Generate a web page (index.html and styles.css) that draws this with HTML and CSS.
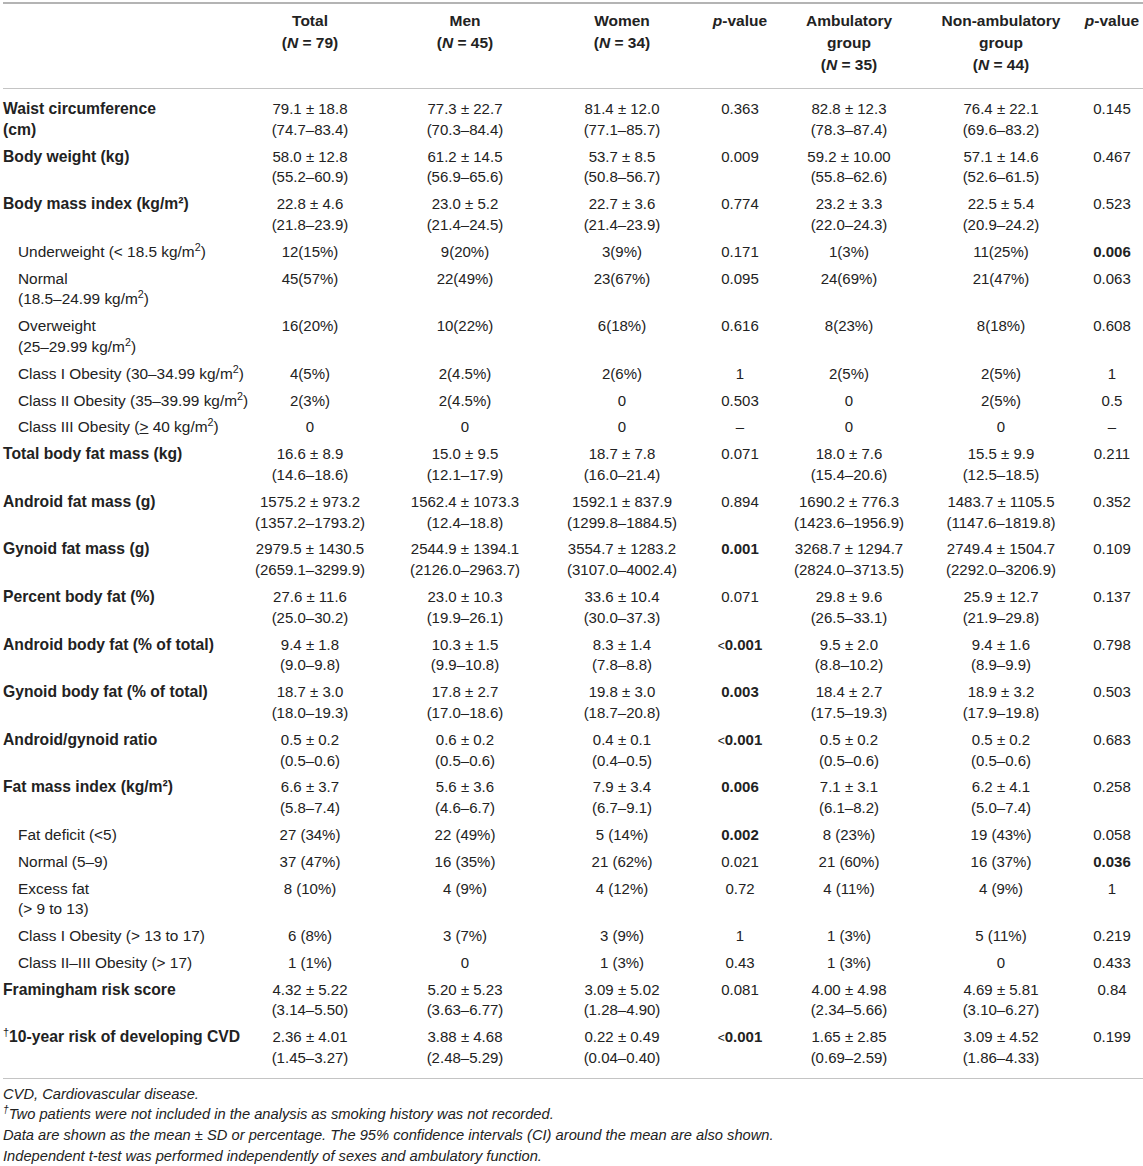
FILE: index.html
```html
<!DOCTYPE html>
<html lang="en">
<head>
  <meta charset="UTF-8">
  <meta name="viewport" content="width=device-width, initial-scale=1.0">
  <title>Body composition and cardiovascular risk</title>
  <link rel="stylesheet" href="styles.css">
</head>
<body>
  <div class="container">
    <table class="data-table">
      <colgroup>
        <col class="col-label">
        <col class="col-total">
        <col class="col-men">
        <col class="col-women">
        <col class="col-p1">
        <col class="col-amb">
        <col class="col-nonamb">
        <col class="col-p2">
      </colgroup>
      <thead>
        <tr>
          <th></th>
          <th>Total<br>(<i>N</i> = 79)</th>
          <th>Men<br>(<i>N</i> = 45)</th>
          <th>Women<br>(<i>N</i> = 34)</th>
          <th><i>p</i>-value</th>
          <th>Ambulatory<br>group<br>(<i>N</i> = 35)</th>
          <th>Non-ambulatory<br>group<br>(<i>N</i> = 44)</th>
          <th><i>p</i>-value</th>
        </tr>
      </thead>
      <tbody>
        <tr>
          <td class="label main">Waist circumference<br>(cm)</td>
          <td>79.1 ± 18.8<br>(74.7–83.4)</td>
          <td>77.3 ± 22.7<br>(70.3–84.4)</td>
          <td>81.4 ± 12.0<br>(77.1–85.7)</td>
          <td>0.363</td>
          <td>82.8 ± 12.3<br>(78.3–87.4)</td>
          <td>76.4 ± 22.1<br>(69.6–83.2)</td>
          <td>0.145</td>
        </tr>
        <tr>
          <td class="label main">Body weight (kg)</td>
          <td>58.0 ± 12.8<br>(55.2–60.9)</td>
          <td>61.2 ± 14.5<br>(56.9–65.6)</td>
          <td>53.7 ± 8.5<br>(50.8–56.7)</td>
          <td>0.009</td>
          <td>59.2 ± 10.00<br>(55.8–62.6)</td>
          <td>57.1 ± 14.6<br>(52.6–61.5)</td>
          <td>0.467</td>
        </tr>
        <tr>
          <td class="label main">Body mass index (kg/m²)</td>
          <td>22.8 ± 4.6<br>(21.8–23.9)</td>
          <td>23.0 ± 5.2<br>(21.4–24.5)</td>
          <td>22.7 ± 3.6<br>(21.4–23.9)</td>
          <td>0.774</td>
          <td>23.2 ± 3.3<br>(22.0–24.3)</td>
          <td>22.5 ± 5.4<br>(20.9–24.2)</td>
          <td>0.523</td>
        </tr>
        <tr>
          <td class="label sub">Underweight (&lt; 18.5 kg/m<sup>2</sup>)</td>
          <td>12(15%)</td>
          <td>9(20%)</td>
          <td>3(9%)</td>
          <td>0.171</td>
          <td>1(3%)</td>
          <td>11(25%)</td>
          <td><b>0.006</b></td>
        </tr>
        <tr>
          <td class="label sub">Normal<br>(18.5–24.99 kg/m<sup>2</sup>)</td>
          <td>45(57%)</td>
          <td>22(49%)</td>
          <td>23(67%)</td>
          <td>0.095</td>
          <td>24(69%)</td>
          <td>21(47%)</td>
          <td>0.063</td>
        </tr>
        <tr>
          <td class="label sub">Overweight<br>(25–29.99 kg/m<sup>2</sup>)</td>
          <td>16(20%)</td>
          <td>10(22%)</td>
          <td>6(18%)</td>
          <td>0.616</td>
          <td>8(23%)</td>
          <td>8(18%)</td>
          <td>0.608</td>
        </tr>
        <tr>
          <td class="label sub">Class I Obesity (30–34.99 kg/m<sup>2</sup>)</td>
          <td>4(5%)</td>
          <td>2(4.5%)</td>
          <td>2(6%)</td>
          <td>1</td>
          <td>2(5%)</td>
          <td>2(5%)</td>
          <td>1</td>
        </tr>
        <tr>
          <td class="label sub">Class II Obesity (35–39.99 kg/m<sup>2</sup>)</td>
          <td>2(3%)</td>
          <td>2(4.5%)</td>
          <td>0</td>
          <td>0.503</td>
          <td>0</td>
          <td>2(5%)</td>
          <td>0.5</td>
        </tr>
        <tr>
          <td class="label sub">Class III Obesity (<u>&gt;</u> 40 kg/m<sup>2</sup>)</td>
          <td>0</td>
          <td>0</td>
          <td>0</td>
          <td>–</td>
          <td>0</td>
          <td>0</td>
          <td>–</td>
        </tr>
        <tr>
          <td class="label main">Total body fat mass (kg)</td>
          <td>16.6 ± 8.9<br>(14.6–18.6)</td>
          <td>15.0 ± 9.5<br>(12.1–17.9)</td>
          <td>18.7 ± 7.8<br>(16.0–21.4)</td>
          <td>0.071</td>
          <td>18.0 ± 7.6<br>(15.4–20.6)</td>
          <td>15.5 ± 9.9<br>(12.5–18.5)</td>
          <td>0.211</td>
        </tr>
        <tr>
          <td class="label main">Android fat mass (g)</td>
          <td>1575.2 ± 973.2<br>(1357.2–1793.2)</td>
          <td>1562.4 ± 1073.3<br>(12.4–18.8)</td>
          <td>1592.1 ± 837.9<br>(1299.8–1884.5)</td>
          <td>0.894</td>
          <td>1690.2 ± 776.3<br>(1423.6–1956.9)</td>
          <td>1483.7 ± 1105.5<br>(1147.6–1819.8)</td>
          <td>0.352</td>
        </tr>
        <tr>
          <td class="label main">Gynoid fat mass (g)</td>
          <td>2979.5 ± 1430.5<br>(2659.1–3299.9)</td>
          <td>2544.9 ± 1394.1<br>(2126.0–2963.7)</td>
          <td>3554.7 ± 1283.2<br>(3107.0–4002.4)</td>
          <td><b>0.001</b></td>
          <td>3268.7 ± 1294.7<br>(2824.0–3713.5)</td>
          <td>2749.4 ± 1504.7<br>(2292.0–3206.9)</td>
          <td>0.109</td>
        </tr>
        <tr>
          <td class="label main">Percent body fat (%)</td>
          <td>27.6 ± 11.6<br>(25.0–30.2)</td>
          <td>23.0 ± 10.3<br>(19.9–26.1)</td>
          <td>33.6 ± 10.4<br>(30.0–37.3)</td>
          <td>0.071</td>
          <td>29.8 ± 9.6<br>(26.5–33.1)</td>
          <td>25.9 ± 12.7<br>(21.9–29.8)</td>
          <td>0.137</td>
        </tr>
        <tr>
          <td class="label main">Android body fat (% of total)</td>
          <td>9.4 ± 1.8<br>(9.0–9.8)</td>
          <td>10.3 ± 1.5<br>(9.9–10.8)</td>
          <td>8.3 ± 1.4<br>(7.8–8.8)</td>
          <td><b><span class="lt">&lt;</span>0.001</b></td>
          <td>9.5 ± 2.0<br>(8.8–10.2)</td>
          <td>9.4 ± 1.6<br>(8.9–9.9)</td>
          <td>0.798</td>
        </tr>
        <tr>
          <td class="label main">Gynoid body fat (% of total)</td>
          <td>18.7 ± 3.0<br>(18.0–19.3)</td>
          <td>17.8 ± 2.7<br>(17.0–18.6)</td>
          <td>19.8 ± 3.0<br>(18.7–20.8)</td>
          <td><b>0.003</b></td>
          <td>18.4 ± 2.7<br>(17.5–19.3)</td>
          <td>18.9 ± 3.2<br>(17.9–19.8)</td>
          <td>0.503</td>
        </tr>
        <tr>
          <td class="label main">Android/gynoid ratio</td>
          <td>0.5 ± 0.2<br>(0.5–0.6)</td>
          <td>0.6 ± 0.2<br>(0.5–0.6)</td>
          <td>0.4 ± 0.1<br>(0.4–0.5)</td>
          <td><b><span class="lt">&lt;</span>0.001</b></td>
          <td>0.5 ± 0.2<br>(0.5–0.6)</td>
          <td>0.5 ± 0.2<br>(0.5–0.6)</td>
          <td>0.683</td>
        </tr>
        <tr>
          <td class="label main">Fat mass index (kg/m²)</td>
          <td>6.6 ± 3.7<br>(5.8–7.4)</td>
          <td>5.6 ± 3.6<br>(4.6–6.7)</td>
          <td>7.9 ± 3.4<br>(6.7–9.1)</td>
          <td><b>0.006</b></td>
          <td>7.1 ± 3.1<br>(6.1–8.2)</td>
          <td>6.2 ± 4.1<br>(5.0–7.4)</td>
          <td>0.258</td>
        </tr>
        <tr>
          <td class="label sub">Fat deficit (&lt;5)</td>
          <td>27 (34%)</td>
          <td>22 (49%)</td>
          <td>5 (14%)</td>
          <td><b>0.002</b></td>
          <td>8 (23%)</td>
          <td>19 (43%)</td>
          <td>0.058</td>
        </tr>
        <tr>
          <td class="label sub">Normal (5–9)</td>
          <td>37 (47%)</td>
          <td>16 (35%)</td>
          <td>21 (62%)</td>
          <td>0.021</td>
          <td>21 (60%)</td>
          <td>16 (37%)</td>
          <td><b>0.036</b></td>
        </tr>
        <tr>
          <td class="label sub">Excess fat<br>(&gt; 9 to 13)</td>
          <td>8 (10%)</td>
          <td>4 (9%)</td>
          <td>4 (12%)</td>
          <td>0.72</td>
          <td>4 (11%)</td>
          <td>4 (9%)</td>
          <td>1</td>
        </tr>
        <tr>
          <td class="label sub">Class I Obesity (&gt; 13 to 17)</td>
          <td>6 (8%)</td>
          <td>3 (7%)</td>
          <td>3 (9%)</td>
          <td>1</td>
          <td>1 (3%)</td>
          <td>5 (11%)</td>
          <td>0.219</td>
        </tr>
        <tr>
          <td class="label sub">Class II–III Obesity (&gt; 17)</td>
          <td>1 (1%)</td>
          <td>0</td>
          <td>1 (3%)</td>
          <td>0.43</td>
          <td>1 (3%)</td>
          <td>0</td>
          <td>0.433</td>
        </tr>
        <tr>
          <td class="label main">Framingham risk score</td>
          <td>4.32 ± 5.22<br>(3.14–5.50)</td>
          <td>5.20 ± 5.23<br>(3.63–6.77)</td>
          <td>3.09 ± 5.02<br>(1.28–4.90)</td>
          <td>0.081</td>
          <td>4.00 ± 4.98<br>(2.34–5.66)</td>
          <td>4.69 ± 5.81<br>(3.10–6.27)</td>
          <td>0.84</td>
        </tr>
        <tr>
          <td class="label main"><sup class="dagger">†</sup>10-year risk of developing CVD</td>
          <td>2.36 ± 4.01<br>(1.45–3.27)</td>
          <td>3.88 ± 4.68<br>(2.48–5.29)</td>
          <td>0.22 ± 0.49<br>(0.04–0.40)</td>
          <td><b><span class="lt">&lt;</span>0.001</b></td>
          <td>1.65 ± 2.85<br>(0.69–2.59)</td>
          <td>3.09 ± 4.52<br>(1.86–4.33)</td>
          <td>0.199</td>
        </tr>
      </tbody>
    </table>

    <div class="notes">
      <p>CVD, Cardiovascular disease.</p>
      <p><sup class="dagger">†</sup>Two patients were not included in the analysis as smoking history was not recorded.</p>
      <p>Data are shown as the mean ± SD or percentage. The 95% confidence intervals (CI) around the mean are also shown.</p>
      <p>Independent t-test was performed independently of sexes and ambulatory function.</p>
    </div>
  </div>
</body>
</html>
```

FILE: styles.css
```css
body {
  margin: 0;
  background-color: #fff;
  color: #222;
  font-family: "Liberation Sans", Arial, sans-serif;
}
.container {
  padding: 2px 0 0 3px;
}
.data-table {
  width: 1140px;
  border-collapse: collapse;
  table-layout: fixed;
  font-size: 15px;
  line-height: 20.8px;
}
.col-label { width: 228px; }
.col-total { width: 158px; }
.col-men { width: 152px; }
.col-women { width: 162px; }
.col-p1 { width: 74px; }
.col-amb { width: 144px; }
.col-nonamb { width: 160px; }
.col-p2 { width: 62px; }
.data-table thead tr {
  border-top: 2px solid #b4b4b4;
  border-bottom: 1px solid #c4c4c4;
}
.data-table th {
  font-size: 15.5px;
  font-weight: bold;
  line-height: 22px;
  text-align: center;
  vertical-align: top;
  padding: 6px 0 12px;
  white-space: nowrap;
}
.data-table td {
  text-align: center;
  vertical-align: top;
  padding: 3px 0;
  white-space: nowrap;
}
.data-table tbody tr:first-child td {
  padding-top: 10px;
}
.data-table tbody tr:last-child {
  border-bottom: 1px solid #c4c4c4;
}
.data-table tbody tr:last-child td {
  padding-bottom: 9px;
}
.data-table td.label {
  text-align: left;
  font-size: 15.7px;
}
.data-table td.main {
  font-weight: bold;
}
.data-table td.sub {
  padding-left: 15px;
  font-size: 15.4px;
}
sup {
  font-size: 0.7em;
  line-height: 0;
}
.dagger {
  font-weight: normal;
}
.lt {
  font-size: 0.8em;
  font-weight: normal;
}
.notes {
  padding-top: 5px;
  font-size: 14.7px;
  font-style: italic;
  line-height: 20.6px;
}
.notes p {
  margin: 0;
}
```
